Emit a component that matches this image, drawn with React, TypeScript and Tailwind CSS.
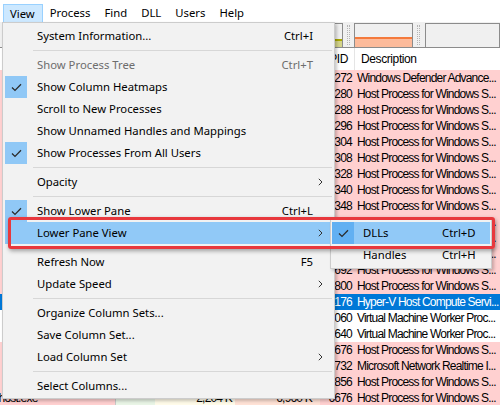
import React from "react";

type MItem =
  | { sep: true }
  | {
      sep?: false;
      label: string;
      shortcut?: string;
      checked?: boolean;
      disabled?: boolean;
      arrow?: boolean;
      hot?: boolean;
    };

const menu: MItem[] = [
  { label: "System Information...", shortcut: "Ctrl+I" },
  { sep: true },
  { label: "Show Process Tree", shortcut: "Ctrl+T", disabled: true },
  { label: "Show Column Heatmaps", checked: true },
  { label: "Scroll to New Processes" },
  { label: "Show Unnamed Handles and Mappings" },
  { label: "Show Processes From All Users", checked: true },
  { sep: true },
  { label: "Opacity", arrow: true },
  { sep: true },
  { label: "Show Lower Pane", shortcut: "Ctrl+L", checked: true },
  { label: "Lower Pane View", arrow: true, hot: true },
  { sep: true },
  { label: "Refresh Now", shortcut: "F5" },
  { label: "Update Speed", arrow: true },
  { sep: true },
  { label: "Organize Column Sets..." },
  { label: "Save Column Set..." },
  { label: "Load Column Set", arrow: true },
  { sep: true },
  { label: "Select Columns..." },
];

type Row = { pid: string; desc: string; kind: "pink" | "white" | "sel" };
const rows: Row[] = [
  { pid: "3272", desc: "Windows Defender Advance...", kind: "pink" },
  { pid: "3280", desc: "Host Process for Windows S...", kind: "pink" },
  { pid: "3288", desc: "Host Process for Windows S...", kind: "pink" },
  { pid: "3296", desc: "Host Process for Windows S...", kind: "pink" },
  { pid: "3304", desc: "Host Process for Windows S...", kind: "pink" },
  { pid: "3308", desc: "Host Process for Windows S...", kind: "pink" },
  { pid: "3328", desc: "Host Process for Windows S...", kind: "pink" },
  { pid: "3340", desc: "Host Process for Windows S...", kind: "pink" },
  { pid: "3348", desc: "Host Process for Windows S...", kind: "pink" },
  { pid: "3356", desc: "Host Process for Windows S...", kind: "pink" },
  { pid: "3364", desc: "Host Process for Windows S...", kind: "pink" },
  { pid: "3372", desc: "Host Process for Windows S...", kind: "pink" },
  { pid: "3692", desc: "Host Process for Windows S...", kind: "pink" },
  { pid: "3800", desc: "Host Process for Windows S...", kind: "pink" },
  { pid: "4176", desc: "Hyper-V Host Compute Servi...", kind: "sel" },
  { pid: "5060", desc: "Virtual Machine Worker Proc...", kind: "white" },
  { pid: "5640", desc: "Virtual Machine Worker Proc...", kind: "white" },
  { pid: "5676", desc: "Host Process for Windows S...", kind: "pink" },
  { pid: "5732", desc: "Microsoft Network Realtime I...", kind: "pink" },
  { pid: "5856", desc: "Host Process for Windows S...", kind: "pink" },
  { pid: "6676", desc: "Host Process for Windows S...", kind: "pink" },
];

function Check() {
  return (
    <svg width="11" height="9" viewBox="0 0 11 9">
      <path d="M1 4.5 L4 7.4 L10 1.2" fill="none" stroke="#2b2b2b" strokeWidth="1.3" />
    </svg>
  );
}

function Chevron() {
  return (
    <svg width="5" height="8" viewBox="0 0 5 8">
      <path d="M0.8 0.8 L4 4 L0.8 7.2" fill="none" stroke="#333" strokeWidth="1" />
    </svg>
  );
}

function Grip() {
  return (
    <div className="flex w-[12px] justify-center py-[2px]">
      <div className="w-[3px] border-x border-dotted border-[#b4b4b4]" />
    </div>
  );
}

export default function App() {
  return (
    <div className="relative h-[405px] w-[500px] overflow-hidden bg-white font-['Noto_Sans',sans-serif] text-[11.3px] text-black">
      {/* Menu bar */}
      <div className="flex h-[22px] items-stretch bg-white pl-[3px] pt-[4px]">
        {["View", "Process", "Find", "DLL", "Users", "Help"].map((m, i) => (
          <div
            key={m}
            className={
              i === 0
                ? "flex items-center border border-b-0 border-[#99d1ff] bg-[#cce8ff] pl-[6px] pr-[7px] leading-none"
                : "flex items-center border border-transparent px-[6px] leading-none"
            }
          >
            {m}
          </div>
        ))}
      </div>

      {/* Toolbar with graphs */}
      <div className="flex h-[25px] items-stretch bg-[#f0f0f0] pl-[300px] pt-[1px]">
        <div className="flex w-[45px] flex-col justify-end border border-b-0 border-[#8c8c8c] bg-[#f0f0f0]">
          <div className="h-[2px] bg-[#a8a800]" />
          <div className="h-[6px] bg-[#d4d48a]" />
        </div>
        <Grip />
        <div className="flex w-[63px] flex-col justify-end border border-b-0 border-[#8c8c8c] bg-[#f0f0f0]">
          <div className="h-[2px] bg-[#f47a3c]" />
          <div className="h-[8px] bg-[#fdbb9b]" />
        </div>
        <Grip />
        <div className="w-[80px] border border-b-0 border-[#8c8c8c] bg-[#f0f0f0]" />
      </div>

      {/* Header */}
      <div className="flex h-[23px] border-t border-[#8c8c8c] bg-white font-['Liberation_Sans',sans-serif] text-[12px] tracking-[-0.4px]">
        <div className="w-[320px] border-r border-[#e5e5e5]" />
        <div className="flex w-[35px] items-center justify-end border-r border-[#e5e5e5] pr-[6px]">PID</div>
        <div className="flex flex-1 items-center pl-[6px]">Description</div>
      </div>

      {/* Rows */}
      <div className="font-['Liberation_Sans',sans-serif] text-[12px] tracking-[-0.8px]">
        {rows.map((r, i) => {
          const bg =
            r.kind === "sel" ? "bg-[#0078d7] text-white" : r.kind === "white" ? "bg-white" : "bg-[#ffd0d0]";
          const last = i === rows.length - 1;
          return (
            <div key={i} className={`flex h-[16px] items-center whitespace-nowrap leading-[16px] ${bg}`}>
              <div className="w-[115px] overflow-hidden">
                <span className="ml-[-17px]">{last ? "svchost.exe" : ""}</span>
              </div>
              <div className={`h-full w-[40px] border-l border-[#c8c8c8] ${r.kind === "sel" ? "" : "bg-[#e9f5e6]"}`} />
              <div className={`flex h-full w-[80px] items-center justify-end pr-[3px] ${r.kind === "sel" ? "" : "bg-[#fffbe9]"}`}>
                {last ? "2,204 K" : ""}
              </div>
              <div className={`flex h-full w-[85px] items-center justify-end pr-[8px] ${r.kind === "sel" ? "" : "bg-[#ffe2d6]"}`}>
                {last ? "6,960 K" : ""}
              </div>
              <div className="flex h-full w-[35px] items-center justify-end pr-[3px]">{r.pid}</div>
              <div className="flex-1 overflow-hidden pl-[2px]">{r.desc}</div>
            </div>
          );
        })}
      </div>

      {/* View menu popup */}
      <div className="absolute left-[2px] top-[22px] w-[333px] border border-[#cccccc] bg-[#f2f2f2] px-[2px] pb-[1px] pt-[2px] shadow-[2px_2px_3px_rgba(0,0,0,0.22)]">
        {menu.map((it, i) =>
          it.sep ? (
            <div key={i} className="h-[7px] pl-[28px] pt-[3px]">
              <div className="h-[1px] bg-[#d7d7d7]" />
            </div>
          ) : (
            <div
              key={i}
              className={`relative flex h-[22px] items-center ${it.hot ? "bg-[#91c9f7]" : ""} ${
                it.disabled ? "text-[#6d6d6d]" : ""
              }`}
            >
              <div
                className={`flex h-[22px] w-[22px] items-center justify-center ${it.checked ? "bg-[#90c8f6]" : ""}`}
              >
                {it.checked ? <Check /> : null}
              </div>
              <div className="flex-1 pl-[10px]">{it.label}</div>
              {it.shortcut ? <div className="pr-[19px]">{it.shortcut}</div> : null}
              {it.arrow ? (
                <div className="absolute right-[9px] top-[7px] flex">
                  <Chevron />
                </div>
              ) : null}
            </div>
          )
        )}
      </div>

      {/* Submenu */}
      <div className="absolute left-[330px] top-[219px] w-[162px] border border-[#cccccc] bg-[#f2f2f2] px-[1px] py-[2px] shadow-[2px_2px_3px_rgba(0,0,0,0.22)]">
        <div className="flex h-[22px] items-center bg-[#91c9f7]">
          <div className="flex h-[22px] w-[22px] items-center justify-center bg-[#62b0f2]">
            <Check />
          </div>
          <div className="flex-1 pl-[9px]">DLLs</div>
          <div className="w-[48px]">Ctrl+D</div>
        </div>
        <div className="flex h-[22px] items-center">
          <div className="w-[22px]" />
          <div className="flex-1 pl-[9px]">Handles</div>
          <div className="w-[48px]">Ctrl+H</div>
        </div>
      </div>

      {/* Red highlight box */}
      <div className="absolute left-[8px] top-[217px] h-[32px] w-[487px] rounded-[3px] border-[3px] border-[#e8383d] shadow-[1px_2px_4px_rgba(0,0,0,0.35)]" />
    </div>
  );
}
